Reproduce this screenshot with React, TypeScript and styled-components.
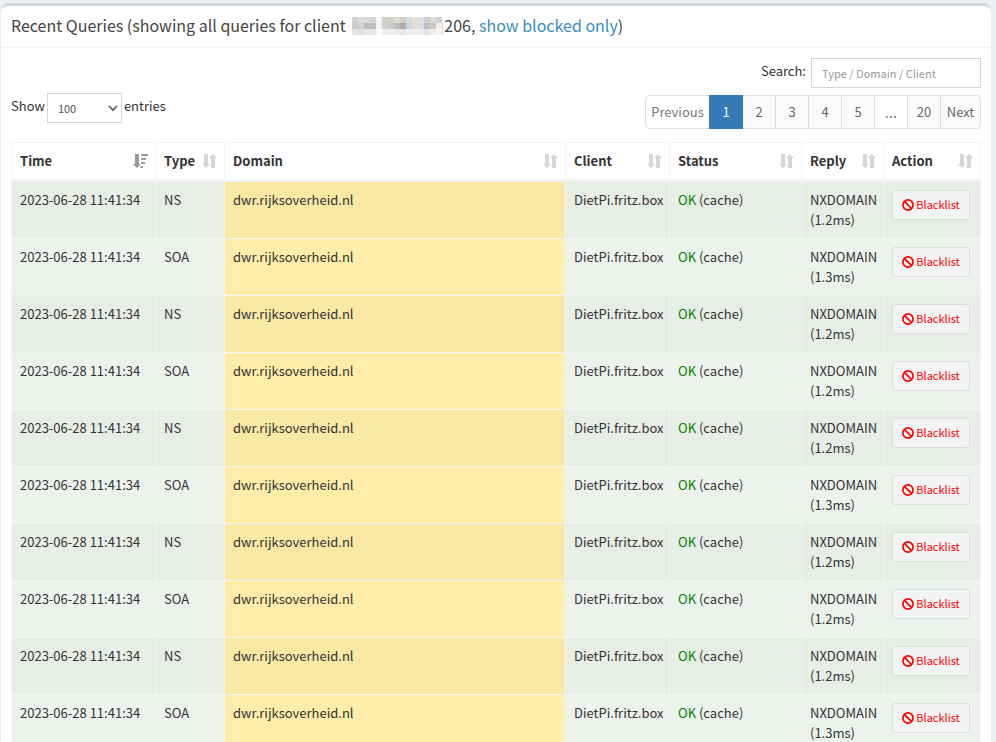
import React, { useState } from "react";
import styled, { createGlobalStyle, css } from "styled-components";

const GlobalStyle = createGlobalStyle`
  *, *::before, *::after { box-sizing: border-box; }
  body {
    margin: 0;
    background: #ecf0f5;
    color: #333;
    font-family: "Source Sans Pro", "Noto Sans CJK SC", sans-serif;
    font-size: 13px;
    line-height: 20px;
  }
  button, input, select { font: inherit; color: inherit; }
`;

const Page = styled.main`
  padding: 3px 5px 12px 1px;
`;

const Panel = styled.section`
  background: #fff;
  border-top: 3px solid #d2d6de;
  border-radius: 8px;
  box-shadow: 0 1px 1px rgba(0, 0, 0, 0.1);
`;

const PanelHeader = styled.header`
  padding: 9px 10px 12px;
  border-bottom: 1px solid #f4f4f4;
`;

const Title = styled.h3`
  display: flex;
  align-items: center;
  margin: 0;
  color: #444;
  font-size: 16px;
  font-weight: 400;
  line-height: 20px;
  white-space: pre;
`;

const TitleLink = styled.a`
  color: #3c8dbc;
  text-decoration: none;
`;

const Mosaic = styled.svg`
  width: 91px;
  height: 18px;
  margin: 2px 1px 0 3px;
  flex: none;
`;

const PanelBody = styled.div`
  padding: 10px;
`;

const Controls = styled.div`
  display: flex;
  justify-content: space-between;
  align-items: flex-end;
  margin-bottom: 13px;
`;

const LengthLabel = styled.label`
  display: flex;
  gap: 2px;
  margin-bottom: 6px;
  line-height: 26px;
`;

const SelectFrame = styled.span`
  display: grid;
  align-items: center;
  > * { grid-area: 1 / 1; }
  > svg { justify-self: end; margin-right: 4px; pointer-events: none; }
`;

const fieldStyle = css`
  height: 30px;
  padding: 0 10px;
  border: 1px solid #d2d6de;
  border-radius: 0;
  background: #fff;
  color: #555;
  font-size: 11px;
`;

const LengthSelect = styled.select`
  ${fieldStyle}
  width: 75px;
  appearance: none;
`;

const Finder = styled.div`
  display: flex;
  flex-direction: column;
  align-items: flex-end;
  gap: 7px;
`;

const SearchLabel = styled.label`
  display: flex;
  gap: 5px;
  line-height: 26px;
`;

const SearchInput = styled.input`
  ${fieldStyle}
  padding-bottom: 1px;
  width: 170px;
  &::placeholder { color: #999; opacity: 1; }
`;

const Pager = styled.nav`
  display: flex;
`;

const PageButton = styled.button<{ $active?: boolean; $plain?: boolean; $width?: number }>`
  width: ${(p) => p.$width ?? 34}px;
  height: 34px;
  margin-left: -1px;
  padding: 0;
  border: 1px solid ${(p) => (p.$active ? "#337ab7" : "#ddd")};
  background: ${(p) => (p.$active ? "#337ab7" : p.$plain ? "#fff" : "#fafafa")};
  color: ${(p) => (p.$active ? "#fff" : p.$plain ? "#777" : "#666")};
  text-align: center;
  cursor: pointer;
  ${(p) => p.$active && css`position: relative;`}
  &:first-child { margin-left: 0; border-radius: 4px 0 0 4px; }
  &:last-child { border-radius: 0 4px 4px 0; }
`;

const Ellipsis = styled.span`
  font-family: "Open Sans", sans-serif;
  font-size: 16px;
`;

const QueryTable = styled.table`
  width: 100%;
  table-layout: fixed;
  border-collapse: separate;
  border-spacing: 0;
  border: 0 solid #f4f4f4;
  border-width: 1px 0 0 1px;
`;

const Column = styled.col<{ $width?: number }>`
  ${(p) => p.$width && css`width: ${p.$width}px;`}
`;

const HeadCell = styled.th`
  padding: 8px 7px 8px 8px;
  border: 0 solid #f4f4f4;
  border-width: 0 1px 3px 0;
  font-weight: 700;
  text-align: left;
`;

const HeadContent = styled.span`
  display: flex;
  align-items: center;
  justify-content: space-between;
`;

const Row = styled.tr`
  background: #ecf3ed;
  &:nth-child(odd) { background: #e7eee6; }
`;

const Cell = styled.td<{ $domain?: boolean }>`
  padding: 8px 4px 8px 8px;
  border: 0 solid #f4f4f4;
  border-width: 0 1px 1px 0;
  vertical-align: top;
  ${(p) => p.$domain && css`
    background: #ffeda9;
    ${Row}:nth-child(odd) & { background: #fae8a5; }
  `}
`;

const Ok = styled.span`
  color: #008000;
`;

const BlacklistButton = styled.button`
  display: flex;
  align-items: center;
  justify-content: center;
  gap: 2px;
  width: 78px;
  height: 30px;
  padding: 0;
  border: 1px solid #ddd;
  border-radius: 3px;
  background: #f4f4f4;
  color: #f00;
  font-size: 11px;
  line-height: 18px;
  cursor: pointer;
`;

const ButtonText = styled.span`
  padding-bottom: 2px;
`;

const mosaicRows = [
  "cfcfcf dcdcdc dadada d2d2d2 f5f5f5 d0d0d0 d4cfca dcdad6 d0cdca d5d9dc ebe1d7 dde3e8 cdcdcd dedad6 cfd3d3",
  "cccccc d4d4d4 bebebe c0c0c0 f4f4f4 d0d0d0 c9c9c7 bfbcb8 b2aaa4 cdd6de e6ddd2 d5dee8 bfbfbf cfc8c2 efefef",
  "e5e5e5 dedede e6e6e6 e8e8e8 fafafa ededed efefef ececec e5e5e5 ebeff3 f2f0ec e7edf0 e3e3e3 eeeeee f3f3f3",
].map((row) => row.split(" "));

function HiddenAddress() {
  return (
    <Mosaic viewBox="0 0 91 18" shapeRendering="crispEdges" role="img" aria-label="hidden address">
      {mosaicRows.map((row, y) =>
        row.map((c, x) => <rect key={`${x}-${y}`} x={x * 6} y={y * 6} width="6" height="6" fill={`#${c}`} />)
      )}
      <rect x="90" y="6" width="1" height="12" fill="#d5d9dc" />
    </Mosaic>
  );
}

function SortIcon({ active }: { active?: boolean }) {
  return (
    <svg width="15" height="16" viewBox="0 0 15 16" fill={active ? "#999" : "#d6d6d6"} aria-hidden="true">
      <path d="M2 1h4v10h2L4 15 0 11h2z" />
      {active ? (
        <path d="M8 1h7v2H8zM8 5h5v2H8zM8 9h4v2H8zM8 13h2v2H7z" />
      ) : (
        <path d="M9 15h4V5h2L11 1 7 5h2z" />
      )}
    </svg>
  );
}

function BanIcon() {
  return (
    <svg width="12" height="12" viewBox="0 0 12 12" fill="none" stroke="currentColor" strokeWidth="1.700" aria-hidden="true">
      <circle cx="6" cy="6" r="5.100" />
      <path d="M2.400 2.400l7.200 7.200" />
    </svg>
  );
}

function Chevron() {
  return (
    <svg width="10" height="8" viewBox="0 0 10 8" fill="none" stroke="#555" strokeWidth="1.600" aria-hidden="true">
      <path d="M1 2l4 4 4-4" />
    </svg>
  );
}

const columns = [
  { name: "Time", width: 144 },
  { name: "Type", width: 69 },
  { name: "Domain" },
  { name: "Client", width: 104 },
  { name: "Status", width: 132 },
  { name: "Reply", width: 82 },
  { name: "Action", width: 97 },
];

const delays = ["1.2", "1.3", "1.2", "1.2", "1.2", "1.3", "1.2", "1.2", "1.2", "1.3"];
const queries = delays.map((delay, i) => ({
  time: "2023-06-28 11:41:34",
  type: i % 2 ? "SOA" : "NS",
  domain: "dwr.rijksoverheid.nl",
  client: "DietPi.fritz.box",
  delay,
}));

export default function App() {
  const [page, setPage] = useState("1");
  return (
    <>
      <GlobalStyle />
      <Page>
        <Panel>
          <PanelHeader>
            <Title>
              <span>Recent Queries (showing all queries for client </span>
              <HiddenAddress />
              <span>206, <TitleLink href="#blocked">show blocked only</TitleLink>)</span>
            </Title>
          </PanelHeader>
          <PanelBody>
            <Controls>
              <LengthLabel>
                Show
                <SelectFrame>
                  <LengthSelect defaultValue="100">
                    <option>10</option>
                    <option>25</option>
                    <option>50</option>
                    <option>100</option>
                  </LengthSelect>
                  <Chevron />
                </SelectFrame>
                entries
              </LengthLabel>
              <Finder>
                <SearchLabel>
                  Search:
                  <SearchInput type="search" placeholder="Type / Domain / Client" />
                </SearchLabel>
                <Pager aria-label="Pages">
                  <PageButton $plain $width={65}>Previous</PageButton>
                  {["1", "2", "3", "4", "5", "…", "20"].map((n) => (
                    <PageButton key={n} $active={n === page} $plain={n === "…"} onClick={() => n !== "…" && setPage(n)}>
                      {n === "…" ? <Ellipsis>{n}</Ellipsis> : n}
                    </PageButton>
                  ))}
                  <PageButton $width={41}>Next</PageButton>
                </Pager>
              </Finder>
            </Controls>
            <QueryTable>
              <colgroup>
                {columns.map((c) => <Column key={c.name} $width={c.width} />)}
              </colgroup>
              <thead>
                <tr>
                  {columns.map((c) => (
                    <HeadCell key={c.name} scope="col">
                      <HeadContent>{c.name}<SortIcon active={c.name === "Time"} /></HeadContent>
                    </HeadCell>
                  ))}
                </tr>
              </thead>
              <tbody>
                {queries.map((q, i) => (
                  <Row key={i}>
                    <Cell>{q.time}</Cell>
                    <Cell>{q.type}</Cell>
                    <Cell $domain>{q.domain}</Cell>
                    <Cell>{q.client}</Cell>
                    <Cell><Ok>OK</Ok> (cache)</Cell>
                    <Cell>NXDOMAIN<br />({q.delay}ms)</Cell>
                    <Cell><BlacklistButton><BanIcon /><ButtonText>Blacklist</ButtonText></BlacklistButton></Cell>
                  </Row>
                ))}
              </tbody>
            </QueryTable>
          </PanelBody>
        </Panel>
      </Page>
    </>
  );
}
